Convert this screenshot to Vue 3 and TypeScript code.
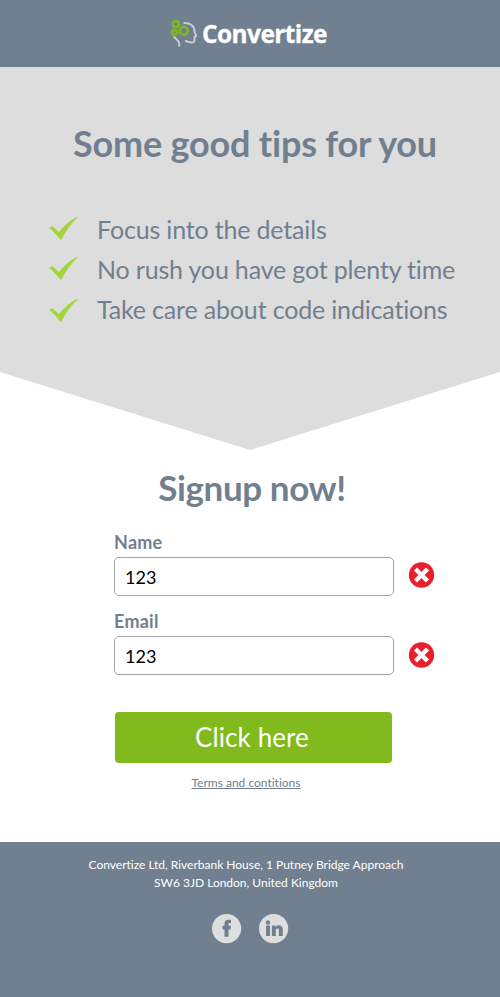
<script setup lang="ts">
import { reactive } from 'vue'

interface Field {
  id: string
  label: string
  value: string
}

interface Gear {
  x: number
  y: number
  r: number
  dash: string
}

const tips: string[] = [
  'Focus into the details',
  'No rush you have got plenty time',
  'Take care about code indications',
]

const fields = reactive<Field[]>([
  { id: 'name', label: 'Name', value: '123' },
  { id: 'email', label: 'Email', value: '123' },
])

const gears: Gear[] = [
  { x: 5.9, y: 6.2, r: 2.7, dash: '1.35 1.35' },
  { x: 4.4, y: 14.4, r: 2.1, dash: '1.15 1.15' },
  { x: 13.8, y: 12.8, r: 3.6, dash: '1.5 1.5' },
]
</script>

<template>
  <div class="page">
    <header class="header">
      <svg class="logo" width="166" height="44" viewBox="0 -5 166 44" role="img" aria-label="Convertize">
        <g fill="none" stroke="#c9cccf" stroke-width="2" stroke-linecap="butt" stroke-linejoin="round">
          <path d="M13.5 5C19.8 4.4 24.3 7.6 24.5 13.2C24.6 14.8 25.3 16 26.3 17.8L24.4 19.3C24.6 22.5 24.5 24.3 22.8 24.4C20.4 24.5 17.4 23.7 15 22.6" />
          <path d="M3.9 18.2C4.6 20.8 9 22.2 9.2 25.2V28.6" />
        </g>
        <g v-for="gear in gears" :key="gear.x" fill="none" stroke="#83bc15">
          <circle :cx="gear.x" :cy="gear.y" :r="gear.r" stroke-width="1.8" />
          <circle :cx="gear.x" :cy="gear.y" :r="gear.r + 1.4" stroke-width="1.4" :stroke-dasharray="gear.dash" />
        </g>
        <text class="logo-name" x="32" y="24.6" textLength="125" lengthAdjust="spacingAndGlyphs">Convertize</text>
      </svg>
    </header>

    <section class="tips">
      <h1 class="title">Some good tips for you</h1>
      <ul class="tip-list">
        <li v-for="tip in tips" :key="tip" class="tip">
          <svg class="check" width="30" height="26" viewBox="0 0 30 26" aria-hidden="true">
            <path d="M.4 12.1L3.2 10L10 16C15.3 9.4 20.8 4.2 28.2 .7L28.8 1.5C22.5 7.4 16.8 14.2 12.8 22.9L11.7 24C8.4 19.8 4.8 15.6 .4 12.1Z" fill="#a3d541" />
          </svg>
          <span>{{ tip }}</span>
        </li>
      </ul>
    </section>

    <main class="signup">
      <h2 class="subtitle">Signup now!</h2>
      <form class="form" @submit.prevent>
        <div v-for="field in fields" :key="field.id" class="field">
          <label class="label" :for="field.id">{{ field.label }}</label>
          <div class="control">
            <input :id="field.id" v-model="field.value" class="input" type="text" />
            <svg class="error" width="26" height="26" viewBox="0 0 26 26" aria-hidden="true">
              <circle cx="12.5" cy="13" r="12.7" fill="#e9202c" />
              <path d="M6.5 7L18.5 19M18.5 7L6.5 19" stroke="#fff" stroke-width="4.5" />
            </svg>
          </div>
        </div>
        <button class="submit" type="submit">Click here</button>
      </form>
      <a class="terms" href="#">Terms and contitions</a>
    </main>

    <footer class="footer">
      <address class="address">
        Convertize Ltd, Riverbank House, 1 Putney Bridge Approach<br />
        SW6 3JD London, United Kingdom
      </address>
      <div class="social">
        <svg width="30" height="30" viewBox="0 0 30 30" role="img" aria-label="Facebook">
          <circle cx="14.6" cy="14.6" r="14.6" fill="#dedede" />
          <path d="M12.5 22.8V15.4H10.5V11.7H12.5V10C12.5 7 14 5.7 16.6 5.7H19V9.1H17.7C16.9 9.1 16.5 9.5 16.5 10.2V11.7H19L18.6 15.4H16.5V22.8Z" fill="#708090" />
        </svg>
        <svg width="30" height="30" viewBox="0 0 30 30" role="img" aria-label="LinkedIn">
          <circle cx="14.6" cy="14.6" r="14.6" fill="#dedede" />
          <g fill="#708090">
            <circle cx="9" cy="8.5" r="2.2" />
            <path d="M7 11.5H11V22H7Z" />
            <path d="M12.9 11.5H16.6V12.9C17.4 11.7 18.5 11.2 19.8 11.2C22.5 11.2 23.8 12.9 23.8 15.7V22H19.9V16.3C19.9 15 19.5 14.4 18.5 14.4C17.3 14.4 16.8 15.2 16.8 16.3V22H12.9Z" />
          </g>
        </svg>
      </div>
    </footer>
  </div>
</template>

<style>
body {
  background: #fff;
}
</style>

<style scoped>
.page {
  display: flex;
  flex-direction: column;
  height: 997px;
  overflow: hidden;
  color: #708090;
  font-family: Lato, "Liberation Sans", sans-serif;
  font-variant-ligatures: none;
}

.page * {
  box-sizing: border-box;
}

.header {
  height: 67px;
  padding: 13px 0 0 170px;
  background: #708090;
}

.logo {
  display: block;
}

.logo-name {
  fill: #fff;
  stroke: #fff;
  stroke-width: 0.3px;
  font: 700 25.5px "Open Sans", "Noto Sans", sans-serif;
  letter-spacing: -0.6px;
}

.tips {
  height: 383px;
  padding-top: 54px;
  background: #ddd;
  clip-path: polygon(0 0, 100% 0, 100% 305px, 50% 100%, 0 305px);
}

.title {
  margin: 0 0 0 10px;
  font-size: 36px;
  font-weight: 700;
  letter-spacing: -0.2px;
  line-height: 44px;
  text-align: center;
  white-space: nowrap;
}

.tip-list {
  margin: 44px 0 0;
  padding: 0 0 0 49px;
  list-style: none;
}

.tip {
  display: flex;
  align-items: flex-start;
  gap: 18px;
  height: 40px;
  font-size: 25px;
  letter-spacing: -0.17px;
  line-height: 40px;
  white-space: nowrap;
}

.check {
  flex: none;
  margin-top: 7px;
}

.tip:last-child .check {
  margin-top: 9px;
}

.signup {
  display: flex;
  flex-direction: column;
  height: 392px;
}

.subtitle {
  margin: 15px 0 0 4px;
  font-size: 35px;
  font-weight: 700;
  letter-spacing: -0.4px;
  line-height: 44px;
  text-align: center;
}

.form {
  margin: 21px 0 0 114px;
}

.field {
  height: 79px;
}

.field:last-of-type .error {
  margin-top: -2px;
}

.label {
  display: block;
  height: 27px;
  font-size: 18px;
  font-weight: 700;
  letter-spacing: 0.25px;
  line-height: 24px;
}

.control {
  display: flex;
  align-items: center;
  gap: 15px;
}

.input {
  width: 280px;
  height: 39px;
  padding: 1px 10px 0;
  border: 1px solid #a3a3a3;
  border-radius: 5px;
  outline: none;
  background: #fff;
  color: #000;
  font-family: inherit;
  font-size: 18px;
}

.error {
  flex: none;
  margin-top: -4px;
}

.submit {
  display: block;
  width: 277px;
  height: 51px;
  margin: 24px 0 0 1px;
  padding: 0 3px 1px 0;
  border: 0;
  border-radius: 4px;
  background: #80ba1d;
  color: #fff;
  font-family: inherit;
  font-size: 26px;
  letter-spacing: 0.1px;
}

.terms {
  align-self: center;
  margin: 12px 8px 0 0;
  color: #708090;
  font-size: 12px;
  line-height: 16px;
}

.footer {
  flex: 1;
  padding-top: 14px;
  background: #708090;
}

.address {
  margin-right: 8px;
  color: #fff;
  font-size: 12px;
  font-style: normal;
  letter-spacing: -0.01px;
  line-height: 18px;
  text-align: center;
}

.social {
  display: flex;
  gap: 17px;
  margin-top: 22px;
  padding-left: 212px;
}
</style>
